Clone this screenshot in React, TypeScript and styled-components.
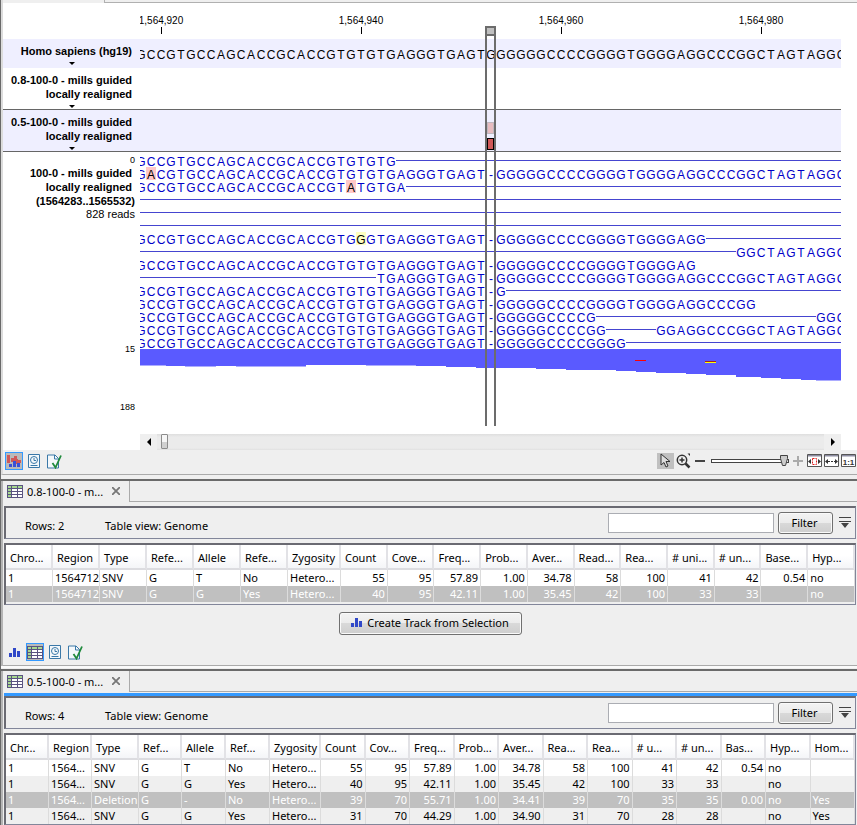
import React from "react";
import styled, { createGlobalStyle, css } from "styled-components";

const ui = `"Noto Sans", "Open Sans", sans-serif`;
const arial = `"Liberation Sans", Arial, sans-serif`;

const GlobalStyle = createGlobalStyle`
  * { box-sizing: border-box; }
  body { margin: 0; background: #efefef; font-family: ${ui}; font-size: 11px; color: #000; }
  button, input { font: inherit; color: inherit; margin: 0; }
`;

/* ---------- sequence data ---------- */

const REFERENCE =
  "GCCGTGCCAGCACCGCACCGTGTGTGAGGGTGAGTGGGGGGCCCCGGGGTGGGGAGGCCCGGCTAGTAGGC";
const COLUMNS = REFERENCE.length;
const GAP_COLUMN = 35;
const ALIGNED = REFERENCE.slice(0, GAP_COLUMN) + "-" + REFERENCE.slice(GAP_COLUMN + 1);

type Part = { from: number; to: number; line?: boolean };
type Read = { parts: Part[]; variant?: { at: number; base: string; kind: "mismatch" | "weak" } };

const text = (from: number, to: number): Part => ({ from, to });
const line = (from: number, to: number): Part => ({ from, to, line: true });

const READS: Read[] = [
  { parts: [text(0, 26), line(26, COLUMNS)] },
  { parts: [text(0, COLUMNS)], variant: { at: 1, base: "A", kind: "mismatch" } },
  { parts: [text(0, 27), line(27, COLUMNS)], variant: { at: 21, base: "A", kind: "mismatch" } },
  { parts: [line(0, COLUMNS)] },
  { parts: [line(0, COLUMNS)] },
  { parts: [line(0, COLUMNS)] },
  { parts: [text(0, 57), line(57, COLUMNS)], variant: { at: 22, base: "G", kind: "weak" } },
  { parts: [line(0, 60), text(60, COLUMNS)] },
  { parts: [text(0, 56)] },
  { parts: [line(0, 24), text(24, COLUMNS)] },
  { parts: [text(0, 37), line(37, COLUMNS)] },
  { parts: [text(0, 62)] },
  { parts: [text(0, 46), line(46, 68), text(68, COLUMNS)] },
  { parts: [text(0, 47), line(47, 52), text(52, COLUMNS)] },
  { parts: [text(0, 49), line(49, COLUMNS)] },
];

/* ---------- genome viewer ---------- */

const Window = styled.div`
  border-left: 1px solid #696969;
`;

const Viewer = styled.section`
  border-left: 2px solid #dcdcdc;
  border-bottom: 1px solid #aaa;
  margin-bottom: 4px;
`;

const TabRemnant = styled.div`
  display: flex;
  height: 3px;
  &::before { content: ""; width: 101px; }
  &::after { content: ""; flex: 1; height: 2px; border-left: 1px solid #b0b0b0; border-bottom: 1px solid #b0b0b0; }
`;

const Tracks = styled.div`
  position: relative;
  background: #fff;
  padding-right: 16px;
`;

const TrackRow = styled.div<{ $shaded?: boolean; $ruled?: boolean }>`
  display: grid;
  grid-template-columns: 137px minmax(0, 1fr);
  background: ${(p) => (p.$shaded ? "#efefff" : "#fff")};
  ${(p) => p.$ruled && css`border-bottom: 1px solid #666;`}
`;

const TrackLabel = styled.div`
  padding: 5px 8px 1px 0;
  text-align: right;
  font: bold 11px/14px ${arial};
  white-space: nowrap;
`;

const MenuArrow = styled.button`
  display: block;
  width: 6px;
  height: 7px;
  margin: 0 57px 0 auto;
  padding: 4px 0 0;
  border: 0;
  background: none;
  svg { display: block; }
`;

const TrackBody = styled.div`
  overflow: hidden;
`;

const Ruler = styled.div`
  display: flex;
  height: 36px;
  margin-left: -79px;
  padding-top: 12px;
`;

const Tick = styled.div`
  flex: none;
  width: 200px;
  text-align: center;
  font: 10px/12px ${arial};
  &::after { content: ""; display: block; width: 1px; height: 7px; margin: 0 auto; background: #000; }
`;

const Sequence = styled.div<{ $reference?: boolean }>`
  display: flex;
  margin-left: -4px;
  height: ${(p) => (p.$reference ? 15 : 13)}px;
  margin-top: ${(p) => (p.$reference ? 8 : 0)}px;
  margin-bottom: ${(p) => (p.$reference ? 6 : 0)}px;
  font: 12px/16px ${arial};
  color: ${(p) => (p.$reference ? "#000" : "#0000c8")};
`;

const Base = styled.span<{ $kind?: "mismatch" | "weak" }>`
  flex: none;
  width: 10px;
  text-align: center;
  ${(p) => p.$kind && css`
    color: #000;
    background: ${p.$kind === "mismatch" ? "#ffc8c8" : "#ffffc0"};
  `}
`;

const PairLine = styled.span<{ $columns: number }>`
  flex: none;
  width: ${(p) => p.$columns * 10}px;
  height: 7px;
  border-bottom: 1px solid #4545d0;
`;

const ReadLabels = styled.div`
  display: flex;
  flex-direction: column;
  padding: 2px 5px 0 0;
  text-align: right;
  white-space: nowrap;
  font: bold 11px/14px ${arial};
`;

const ReadName = styled.div`
  padding-right: 3px;
`;

const ReadCount = styled.div`
  font-weight: normal;
  line-height: 13px;
`;

const ScaleMark = styled.div<{ $gap?: number }>`
  margin-top: ${(p) => p.$gap ?? 0}px;
  font: 9px/12px ${arial};
`;

const ReadBody = styled.div`
  overflow: hidden;
  padding-top: 2px;
`;

const Coverage = styled.svg`
  display: block;
  height: 85px;
`;

const Selection = styled.div`
  position: absolute;
  left: 482px;
  top: 23px;
  width: 11px;
  height: 400px;
  border: 2px solid #6c6c6c;
  border-width: 0 2px;
`;

const SelectionHandle = styled.button`
  position: absolute;
  left: -2px;
  top: 0;
  width: 11px;
  height: 10px;
  padding: 0;
  border: 2px solid #6c6c6c;
  background: #c0c0c0;
`;

const Variants = styled.div`
  display: flex;
  flex-direction: column;
  gap: 4px;
  padding: 12px 0 0 347px;
`;

const Variant = styled.span<{ $faded?: boolean }>`
  width: 7px;
  height: 12px;
  border: 1px solid ${(p) => (p.$faded ? "#c0b8c0" : "#000")};
  background: ${(p) => (p.$faded ? "#e8bcc0" : "#d05858")};
`;

const Scroller = styled.div`
  display: flex;
  align-items: stretch;
  height: 16px;
  margin-left: 137px;
  background: linear-gradient(#dedede, #ebebeb 3px, #ebebeb 14px, #e0e0e0);
`;

const ScrollArrow = styled.button`
  width: 17px;
  padding: 0;
  border: 0;
  background: #efefef;
  display: grid;
  place-items: center;
`;

const ScrollThumb = styled.button`
  width: 7px;
  margin: 0 auto 1px 4px;
  padding: 0;
  border: 1px solid #8c8c8c;
  border-radius: 1px;
  background: linear-gradient(#f6f6f6 50%, #d0d0d0 50%);
`;

const BottomBar = styled.div`
  display: flex;
  align-items: flex-start;
  justify-content: space-between;
  height: 24px;
  padding: 2px 0 0 2px;
`;

const IconGroup = styled.div`
  display: flex;
  gap: 2px;
`;

const IconButton = styled.button<{ $active?: boolean }>`
  display: grid;
  place-items: center;
  width: 18px;
  height: 18px;
  padding: 0;
  border: 1px solid ${(p) => (p.$active ? "#3399ff" : "transparent")};
  background: ${(p) => (p.$active ? "#bababa" : "none")};
`;

const ZoomTools = styled.div`
  display: flex;
  align-items: center;
  height: 17px;
`;

const ToolButton = styled.button<{ $pressed?: boolean }>`
  display: grid;
  place-items: center;
  width: 17px;
  height: 16px;
  padding: 0;
  border: 0;
  background: ${(p) => (p.$pressed ? "#c0c0c0" : "none")};
`;

const ZoomSlider = styled.input`
  appearance: none;
  width: 78px;
  height: 16px;
  margin: 0 0 0 3px;
  background: none;
  &::-webkit-slider-runnable-track {
    height: 4px;
    border: 1px solid #444;
    background: #fff;
  }
  &::-webkit-slider-thumb {
    appearance: none;
    width: 8px;
    height: 11px;
    margin-top: -5px;
    border: 0;
    border-radius: 0;
    background: url("data:image/svg+xml,%3Csvg xmlns='http://www.w3.org/2000/svg' width='8' height='11'%3E%3Cpath d='M.5.5h7v3l-2 7h-3l-2-7z' fill='%23ccc' stroke='%23444'/%3E%3C/svg%3E");
  }
`;

/* ---------- table panels ---------- */

const Panel = styled.section`
  border-top: 2px solid #6a6a6a;
`;

const PanelInner = styled.div`
  border-left: 2px solid #b4b4b4;
`;

const TabBar = styled.div`
  display: flex;
  height: 21px;
  &::after { content: ""; flex: 1; border-bottom: 1px solid #aaa; }
`;

const Tab = styled.div`
  display: flex;
  align-items: center;
  width: 127px;
  padding: 0 0 1px 4px;
  border-right: 1px solid #aaa;
  white-space: nowrap;
`;

const TabTitle = styled.span`
  margin: 0 9px 0 4px;
`;

const CloseButton = styled.button`
  display: grid;
  padding: 0;
  border: 0;
  background: none;
`;

const FocusLine = styled.div<{ $focused?: boolean }>`
  height: 4px;
  margin-left: 1px;
  border-bottom: 3px solid ${(p) => (p.$focused ? "#3399ff" : "transparent")};
`;

const frame = css`
  margin: 0 1px 0 1px;
  border: 1px solid #82869a;
  border-top: 2px solid #6a6a72;
  border-left: 2px solid #6a6a72;
`;

const FilterBar = styled.form`
  ${frame}
  display: flex;
  align-items: center;
  height: 33px;
  padding: 0 4px 0 19px;
  white-space: nowrap;
`;

const Info = styled.span<{ $width?: number }>`
  flex: ${(p) => (p.$width ? "none" : "1")};
  width: ${(p) => (p.$width ? p.$width + "px" : "auto")};
  padding-top: 4px;
`;

const FilterInput = styled.input`
  width: 166px;
  height: 20px;
  border: 1px solid #abadb3;
  background: #fff;
  outline: 0;
`;

const PushButton = styled.button`
  display: inline-flex;
  align-items: center;
  justify-content: center;
  gap: 4px;
  height: 22px;
  padding: 0 13px;
  border: 1px solid #707070;
  border-radius: 3px;
  background: linear-gradient(#f3f3f3, #ebebeb 50%, #d9d9d9 50%, #cecece);
  box-shadow: inset 0 0 0 1px #fafafa;
  white-space: nowrap;
`;

const FilterButton = styled(PushButton)`
  width: 55px;
  padding: 0 2px 2px 0;
  margin: 0 6px 0 4px;
`;

const MoreButton = styled.button`
  display: grid;
  padding: 0 0 2px;
  border: 0;
  background: none;
`;

const TableFrame = styled.div<{ $pad?: number }>`
  ${frame}
  margin-top: 4px;
  padding-bottom: ${(p) => p.$pad ?? 0}px;
`;

const Table = styled.table`
  width: 100%;
  table-layout: fixed;
  border-collapse: separate;
  border-spacing: 0;
  background: #fff;
`;

const Head = styled.th`
  height: 25px;
  padding: 2px 0 0 4px;
  overflow: hidden;
  white-space: nowrap;
  text-align: left;
  font-weight: normal;
  line-height: 16px;
  border-right: 2px solid #e2e2e6;
  border-bottom: 2px solid #dcdce0;
  background: linear-gradient(#fff 45%, #f4f5f8);
`;

const Row = styled.tr<{ $selected?: boolean; $even?: boolean }>`
  background: ${(p) => (p.$selected ? "#c0c0c0" : p.$even ? "#efefef" : "#fff")};
  color: ${(p) => (p.$selected ? "#fff" : "#000")};
`;

const Cell = styled.td<{ $right?: boolean }>`
  height: 16px;
  padding: 0 2px;
  overflow: hidden;
  white-space: nowrap;
  line-height: 16px;
  text-align: ${(p) => (p.$right ? "right" : "left")};
  border-right: 1px solid #dcdcdc;
`;

const PanelFooter = styled.footer`
  display: flex;
  flex-direction: column;
  padding: 7px 0 4px 3px;
  border-bottom: 1px solid #aaa;
`;

const ActionRow = styled.div`
  display: flex;
  justify-content: center;
  padding: 0 3px 8px 0;
`;

const ActionButton = styled(PushButton)`
  width: 183px;
  height: 23px;
  padding: 0 0 2px;
`;

const Divider = styled.div`
  height: 3px;
  border-top: 2px solid #fafafa;
`;

/* ---------- icons ---------- */

const TracksIcon = () => (
  <svg width="16" height="16" viewBox="0 0 16 16" shapeRendering="crispEdges">
    <path fill="#d05858" d="M1 2h3v8H1zM5 5h3v4H5zM8 3h3v5H8zM10 6h2v5h-2zM12 7h3v3h-3z" />
    <path fill="#3a50d8" d="M3 11h3v3H3zM7 8h3v6H7zM11 10h3v4h-3z" />
  </svg>
);

const BarsIcon = () => (
  <svg width="12" height="9" viewBox="0 0 12 9" shapeRendering="crispEdges">
    <path fill="#3048c8" d="M0 5h3v4H0zM4 0h3v9H4zM8 3h3v6H8z" />
  </svg>
);

const TableIcon = () => (
  <svg width="16" height="13" viewBox="0 0 16 13" shapeRendering="crispEdges">
    <path fill="#5a5480" d="M0 0h16v13H0z" />
    <path fill="#a8d890" d="M1 1h3v2H1zM5 1h5v2H5zM11 1h4v2h-4zM1 4h3v2H1zM1 7h3v2H1zM1 10h3v2H1z" />
    <path fill="#fff" d="M5 4h5v2H5zM11 4h4v2h-4zM5 7h5v2H5zM11 7h4v2h-4zM5 10h5v2H5zM11 10h4v2h-4z" />
  </svg>
);

const HistoryIcon = () => (
  <svg width="12" height="14" viewBox="0 0 12 14" fill="none" stroke="#3a78a8">
    <path fill="#f4f8fb" d="M.5.5h11v13H.5z" />
    <circle cx="6" cy="6" r="3.5" />
    <path d="M6 4v2.5h2M2.500 11.500h7" />
  </svg>
);

const ElementInfoIcon = () => (
  <svg width="15" height="15" viewBox="0 0 15 15" fill="none">
    <path d="M.5 1h7.500l3.500 3.500V14H.5z" fill="#f4f8fb" stroke="#3a78a8" />
    <path d="M7.500 1v4h4" stroke="#3a78a8" />
    <path d="M5.500 9l3 4.500L14 1.500" stroke="#1f8a3c" strokeWidth="1.800" />
  </svg>
);

const CursorIcon = () => (
  <svg width="11" height="15" viewBox="0 0 11 15">
    <path d="M1 1v11l3-2.500 2 4.500 2-1-2-4.500h4z" fill="#ddd" stroke="#333" />
  </svg>
);

const ZoomIcon = () => (
  <svg width="16" height="16" viewBox="0 0 16 16" fill="none" stroke="#333">
    <circle cx="7" cy="7" r="4.700" strokeWidth="1.500" />
    <path d="M4.500 7h5M7 4.500v5" strokeWidth="1.500" />
    <path d="M10.500 10.500l4 4" strokeWidth="2.500" />
    <path d="M12.500 0.500H15V3z" fill="#333" stroke="none" />
  </svg>
);

const SignIcon = ({ plus }: { plus?: boolean }) => (
  <svg width="10" height="10" viewBox="0 0 10 10" shapeRendering="crispEdges">
    <path d={plus ? "M0 4h10v2H0zM4 0h2v10H4z" : "M0 4h10v2H0z"} fill={plus ? "#aaa" : "#444"} />
  </svg>
);

const FitIcon = ({ kind }: { kind: "selection" | "width" | "one" }) => (
  <svg width="15" height="13" viewBox="0 0 15 13">
    <path d="M.5.5h14v12H.5z" fill="#fff" stroke="#555" />
    <path d="M1 1h13v1.500H1z" fill="#8c8ca0" />
    {kind === "selection" && <path d="M5.500 4.500h4v6h-4z" fill="none" stroke="#e02020" strokeDasharray="2 1" />}
    {kind === "width" && <path d="M4 7.500h7" stroke="#333" strokeDasharray="2 1" />}
    {kind !== "one" && <path d="M4 5v5L1 7.500zM11 5v5l3-2.500z" fill="#333" />}
    {kind === "one" && (
      <text x="7.500" y="11" fontFamily="Liberation Sans" fontSize="8" fontWeight="bold" textAnchor="middle" fill="#333">1:1</text>
    )}
  </svg>
);

const Triangle = ({ d, w = 6, h = 3 }: { d: string; w?: number; h?: number }) => (
  <svg width={w} height={h} viewBox={`0 0 ${w} ${h}`}>
    <path d={d} fill="#000" />
  </svg>
);

/* ---------- viewer pieces ---------- */

const SequenceText = ({ read }: { read: Read }) => (
  <Sequence>
    {read.parts.map((part) =>
      part.line ? (
        <PairLine key={part.from} $columns={part.to - part.from} />
      ) : (
        [...ALIGNED.slice(part.from, part.to)].map((base, i) => {
          const hit = read.variant?.at === part.from + i ? read.variant : undefined;
          return (
            <Base key={part.from + i} $kind={hit?.kind}>
              {hit ? hit.base : base}
            </Base>
          );
        })
      )
    )}
  </Sequence>
);

const TrackTitle = ({ lines }: { lines: string[] }) => (
  <TrackLabel>
    {lines.map((l) => (
      <div key={l}>{l}</div>
    ))}
    <MenuArrow aria-label="Track options">
      <Triangle d="M0 0h6L3 3z" />
    </MenuArrow>
  </TrackLabel>
);

const ViewIcons = ({ table }: { table?: boolean }) => (
  <IconGroup>
    {table ? (
      <>
        <IconButton aria-label="Track view"><BarsIcon /></IconButton>
        <IconButton aria-label="Table view" $active><TableIcon /></IconButton>
      </>
    ) : (
      <IconButton aria-label="Track list view" $active><TracksIcon /></IconButton>
    )}
    <IconButton aria-label="History"><HistoryIcon /></IconButton>
    <IconButton aria-label="Element info"><ElementInfoIcon /></IconButton>
  </IconGroup>
);

const GenomeViewer = () => (
  <Viewer>
    <TabRemnant />
    <Tracks>
      <TrackRow>
        <span />
        <TrackBody>
          <Ruler>
            {["1,564,920", "1,564,940", "1,564,960", "1,564,980"].map((t) => (
              <Tick key={t}>{t}</Tick>
            ))}
          </Ruler>
        </TrackBody>
      </TrackRow>
      <TrackRow $shaded>
        <TrackTitle lines={["Homo sapiens (hg19)"]} />
        <TrackBody>
          <Sequence $reference>
            {[...REFERENCE].map((b, i) => (
              <Base key={i}>{b}</Base>
            ))}
          </Sequence>
        </TrackBody>
      </TrackRow>
      <TrackRow $ruled>
        <TrackTitle lines={["0.8-100-0 - mills guided", "locally realigned"]} />
        <TrackBody />
      </TrackRow>
      <TrackRow $shaded $ruled>
        <TrackTitle lines={["0.5-100-0 - mills guided", "locally realigned"]} />
        <TrackBody>
          <Variants>
            <Variant $faded />
            <Variant />
          </Variants>
        </TrackBody>
      </TrackRow>
      <TrackRow>
        <ReadLabels>
          <ScaleMark>0</ScaleMark>
          <ReadName>100-0 - mills guided</ReadName>
          <ReadName>locally realigned</ReadName>
          <div>(1564283..1565532)</div>
          <ReadCount>828 reads</ReadCount>
          <ScaleMark $gap={122}>15</ScaleMark>
          <ScaleMark $gap={46}>188</ScaleMark>
        </ReadLabels>
        <ReadBody>
          {READS.map((r, i) => (
            <SequenceText key={i} read={r} />
          ))}
          <Coverage width="701" viewBox="0 0 701 85" aria-label="Coverage">
            <path
              fill="#5a5aff"
              d="M0 0H701V31.500H676V31H661V30H641V29H621V28H596V26H566V25H546V24H516V23H496V22H476V21H426V20H396V19H336V18H306V17H276V16.500H226V16H166V17.500H96V17H76V17.500H45V17H26V16.500H0Z"
            />
            <path fill="#ff0000" d="M495 11h11v1h-11z" />
            <path fill="#ffff00" d="M565 13h11v1h-11z" />
            <path fill="#a02020" d="M565 12h11v1h-11z" />
          </Coverage>
        </ReadBody>
      </TrackRow>
      <Scroller>
        <ScrollArrow aria-label="Scroll left">
          <Triangle w={4} h={8} d="M4 0v8L0 4z" />
        </ScrollArrow>
        <ScrollThumb aria-label="Scroll position" />
        <ScrollArrow aria-label="Scroll right">
          <Triangle w={4} h={8} d="M0 0v8l4-4z" />
        </ScrollArrow>
      </Scroller>
      <Selection>
        <SelectionHandle aria-label="Selection" />
      </Selection>
    </Tracks>
    <BottomBar>
      <ViewIcons />
      <ZoomTools>
        <ToolButton aria-label="Select" $pressed><CursorIcon /></ToolButton>
        <ToolButton aria-label="Zoom in tool"><ZoomIcon /></ToolButton>
        <ToolButton aria-label="Zoom out"><SignIcon /></ToolButton>
        <ZoomSlider type="range" aria-label="Zoom level" defaultValue={100} />
        <ToolButton aria-label="Zoom in"><SignIcon plus /></ToolButton>
        <ToolButton aria-label="Fit selection"><FitIcon kind="selection" /></ToolButton>
        <ToolButton aria-label="Fit width"><FitIcon kind="width" /></ToolButton>
        <ToolButton aria-label="Zoom to base level"><FitIcon kind="one" /></ToolButton>
      </ZoomTools>
    </BottomBar>
  </Viewer>
);

/* ---------- tables ---------- */

type TableData = {
  title: string;
  heads: string[];
  widths: (number | undefined)[];
  rows: string[][];
  selected: number;
};

const GUIDED: TableData = {
  title: "0.8-100-0 - m...",
  heads: ["Chro...", "Region", "Type", "Refe...", "Allele", "Refe...", "Zygosity", "Count", "Cove...", "Freq...", "Prob...", "Aver...", "Read...", "Rea...", "# uni...", "# un...", "Base...", "Hyp..."],
  widths: [47, 47, 47, 47, 47, 47, 53],
  rows: [
    ["1", "1564712", "SNV", "G", "T", "No", "Hetero...", "55", "95", "57.89", "1.00", "34.78", "58", "100", "41", "42", "0.54", "no"],
    ["1", "1564712", "SNV", "G", "G", "Yes", "Hetero...", "40", "95", "42.11", "1.00", "35.45", "42", "100", "33", "33", "", "no"],
  ],
  selected: 1,
};

const GUIDED_LOW: TableData = {
  title: "0.5-100-0 - m...",
  heads: ["Chr...", "Region", "Type", "Ref...", "Allele", "Ref...", "Zygosity", "Count", "Cov...", "Freq...", "Prob...", "Aver...", "Rea...", "Rea...", "# u...", "# un...", "Bas...", "Hyp...", "Hom..."],
  widths: [43, 43, 47, 43, 44, 44, 51],
  rows: [
    ["1", "1564...", "SNV", "G", "T", "No", "Hetero...", "55", "95", "57.89", "1.00", "34.78", "58", "100", "41", "42", "0.54", "no", ""],
    ["1", "1564...", "SNV", "G", "G", "Yes", "Hetero...", "40", "95", "42.11", "1.00", "35.45", "42", "100", "33", "33", "", "no", ""],
    ["1", "1564...", "Deletion", "G", "-", "No", "Hetero...", "39", "70", "55.71", "1.00", "34.41", "39", "70", "35", "35", "0.00", "no", "Yes"],
    ["1", "1564...", "SNV", "G", "G", "Yes", "Hetero...", "31", "70", "44.29", "1.00", "34.90", "31", "70", "28", "28", "", "no", "Yes"],
  ],
  selected: 2,
};

const isNumeric = (column: number) => column >= 7 && column <= 16;

const TablePanel = ({ data, focused, footer }: { data: TableData; focused?: boolean; footer?: React.ReactNode }) => (
  <Panel>
    <PanelInner>
      <TabBar>
        <Tab>
          <TableIcon />
          <TabTitle>{data.title}</TabTitle>
          <CloseButton aria-label="Close tab">
            <svg width="8" height="8" viewBox="0 0 8 8">
              <path d="M0 0l8 8M8 0L0 8" stroke="#777" strokeWidth="1.800" />
            </svg>
          </CloseButton>
        </Tab>
      </TabBar>
      <FocusLine $focused={focused} />
      <FilterBar onSubmit={(e) => e.preventDefault()}>
        <Info $width={80}>Rows: {data.rows.length}</Info>
        <Info>Table view: Genome</Info>
        <FilterInput type="text" aria-label="Filter text" />
        <FilterButton type="submit">Filter</FilterButton>
        <MoreButton type="button" aria-label="Advanced filter">
          <svg width="12" height="11" viewBox="0 0 12 11">
            <path d="M0 0h12v1H0zM0 4h12v1H0zM2 6h8l-4 5z" fill="#444" />
          </svg>
        </MoreButton>
      </FilterBar>
      <TableFrame $pad={footer ? 2 : 0}>
        <Table aria-label={data.title}>
          <colgroup>
            {data.heads.map((_, i) => (
              <col key={i} width={data.widths[i]} />
            ))}
          </colgroup>
          <thead>
            <tr>
              {data.heads.map((h, i) => (
                <Head key={i} scope="col">{h}</Head>
              ))}
            </tr>
          </thead>
          <tbody>
            {data.rows.map((row, r) => (
              <Row key={r} $selected={r === data.selected} $even={r % 2 === 1}>
                {row.map((value, c) => (
                  <Cell key={c} $right={isNumeric(c)}>{value}</Cell>
                ))}
              </Row>
            ))}
          </tbody>
        </Table>
      </TableFrame>
      {footer}
    </PanelInner>
  </Panel>
);

export default function App() {
  return (
    <>
      <GlobalStyle />
      <Window>
        <GenomeViewer />
        <TablePanel
          data={GUIDED}
          footer={
            <PanelFooter>
              <ActionRow>
                <ActionButton><BarsIcon />Create Track from Selection</ActionButton>
              </ActionRow>
              <ViewIcons table />
            </PanelFooter>
          }
        />
        <Divider />
        <TablePanel data={GUIDED_LOW} focused />
      </Window>
    </>
  );
}
